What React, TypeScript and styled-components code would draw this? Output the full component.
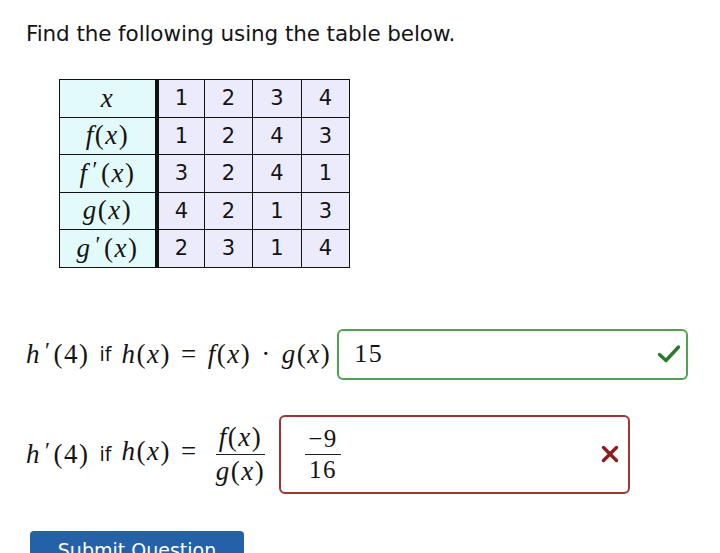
import React from "react";
import styled, { createGlobalStyle } from "styled-components";

const Global = createGlobalStyle`
  html, body { margin: 0; padding: 0; background: #ffffff; }
  body { font-family: "DejaVu Sans", Verdana, sans-serif; color: #141414; }
`;

const Page = styled.div`
  padding: 20px 0 0 26px;
  width: 720px;
  height: 553px;
  box-sizing: border-box;
  overflow: hidden;
`;

const Title = styled.h1`
  margin: 0;
  font-size: 21.5px;
  font-weight: normal;
  line-height: 28px;
  letter-spacing: -0.1px;
`;

const Table = styled.table`
  margin: 31px 0 0 33px;
  border-collapse: collapse;
  border: 1.5px solid #111;
`;

const HeadCell = styled.th`
  width: 95px;
  height: 36.5px;
  padding: 0;
  background: #e2fafa;
  border: 1.5px solid #111;
  border-right: 4px solid #111;
  font-weight: normal;
  text-align: center;
`;

const ValCell = styled.td<{ $w: number }>`
  width: ${(p) => p.$w}px;
  height: 36.5px;
  padding: 0;
  background: #ecebfb;
  border: 1.5px solid #111;
  text-align: center;
  font-size: 21px;
  font-family: "DejaVu Sans", Verdana, sans-serif;
`;

const Math = styled.span<{ $size?: number }>`
  font-family: "Liberation Serif", "Times New Roman", serif;
  font-size: ${(p) => p.$size ?? 27}px;
  letter-spacing: 1.5px;
  white-space: nowrap;
`;

const V = styled.i`
  font-style: italic;
`;

const Prime = styled.span`
  font-size: 0.85em;
  vertical-align: 0.2em;
  margin: 0 2px 0 4px;
`;

const Op = styled.span`
  margin: 0 10px;
`;

const Word = styled.span`
  font-family: "DejaVu Sans", Verdana, sans-serif;
  font-size: 19px;
  margin: 0 10px;
`;

const Row = styled.div<{ $top: number }>`
  display: flex;
  align-items: center;
  margin-top: ${(p) => p.$top}px;
`;

const Frac = styled.span`
  display: inline-flex;
  flex-direction: column;
  align-items: center;
  vertical-align: middle;
  margin: 0 5px;
`;

const Num = styled.span`
  padding: 0 3px 1px;
  border-bottom: 1.5px solid #222;
  line-height: 1.12;
`;

const Den = styled.span`
  padding: 1px 3px 0;
  line-height: 1.12;
`;

const Answer = styled.div<{ $ok: boolean; $h: number; $pr: number; $pl: number }>`
  display: flex;
  align-items: center;
  justify-content: space-between;
  box-sizing: border-box;
  width: 351px;
  height: ${(p) => p.$h}px;
  margin-left: 6px;
  padding: 0 ${(p) => p.$pr}px 0 ${(p) => p.$pl}px;
  border: 2px solid ${(p) => (p.$ok ? "#52a052" : "#a03434")};
  border-radius: 6px;
  background: #fff;
`;

const Button = styled.button`
  margin-top: 37px;
  margin-left: 4px;
  width: 214px;
  height: 40px;
  border: none;
  border-radius: 4px;
  background: #2461a9;
  color: #fff;
  font-family: "DejaVu Sans", Verdana, sans-serif;
  font-size: 19px;
  padding: 8px 0 0;
  align-self: flex-start;
  display: flex;
  justify-content: center;
  align-items: flex-start;
`;

const Col = styled.div`
  display: flex;
  flex-direction: column;
`;

const Check = () => (
  <svg width="24" height="20" viewBox="0 0 24 20">
    <path d="M2.5 10.5 L9 16.5 L21.5 3" fill="none" stroke="#2c7a2c" strokeWidth="3.4" strokeLinecap="round" strokeLinejoin="round" />
  </svg>
);

const Cross = () => (
  <svg width="18" height="18" viewBox="0 0 18 18">
    <path d="M2.5 2.5 L15.5 15.5 M15.5 2.5 L2.5 15.5" fill="none" stroke="#8e1c1c" strokeWidth="3.4" strokeLinecap="round" />
  </svg>
);

const rows: { label: React.ReactNode; vals: number[] }[] = [
  { label: <V>x</V>, vals: [1, 2, 3, 4] },
  { label: <><V>f</V>(<V>x</V>)</>, vals: [1, 2, 4, 3] },
  { label: <><V>f</V><Prime>′</Prime>(<V>x</V>)</>, vals: [3, 2, 4, 1] },
  { label: <><V>g</V>(<V>x</V>)</>, vals: [4, 2, 1, 3] },
  { label: <><V>g</V><Prime>′</Prime>(<V>x</V>)</>, vals: [2, 3, 1, 4] },
];

const widths = [45, 47, 48, 47];

const HPrime = () => (
  <Math>
    <V>h</V>
    <Prime>′</Prime>(4)
  </Math>
);

export default function App() {
  return (
    <>
      <Global />
      <Page>
        <Title>Find the following using the table below.</Title>
        <Table>
          <tbody>
            {rows.map((r, i) => (
              <tr key={i}>
                <HeadCell>
                  <Math $size={27}>{r.label}</Math>
                </HeadCell>
                {r.vals.map((v, j) => (
                  <ValCell key={j} $w={widths[j]}>
                    {v}
                  </ValCell>
                ))}
              </tr>
            ))}
          </tbody>
        </Table>
        <Col>
          <Row $top={61}>
            <HPrime />
            <Word>if</Word>
            <Math>
              <V>h</V>(<V>x</V>)<Op>=</Op><V>f</V>(<V>x</V>)<Op>·</Op><V>g</V>(<V>x</V>)
            </Math>
            <Answer $ok={true} $h={51} $pr={5} $pl={15}>
              <Math $size={26}>15</Math>
              <Check />
            </Answer>
          </Row>
          <Row $top={35}>
            <HPrime />
            <Word>if</Word>
            <Math>
              <V>h</V>(<V>x</V>)<Op>=</Op>
              <Frac>
                <Num><V>f</V>(<V>x</V>)</Num>
                <Den><V>g</V>(<V>x</V>)</Den>
              </Frac>
            </Math>
            <Answer $ok={false} $h={79} $pr={9} $pl={19}>
              <Math $size={25}>
                <Frac>
                  <Num>−9</Num>
                  <Den>16</Den>
                </Frac>
              </Math>
              <Cross />
            </Answer>
          </Row>
          <Button>Submit Question</Button>
        </Col>
      </Page>
    </>
  );
}
